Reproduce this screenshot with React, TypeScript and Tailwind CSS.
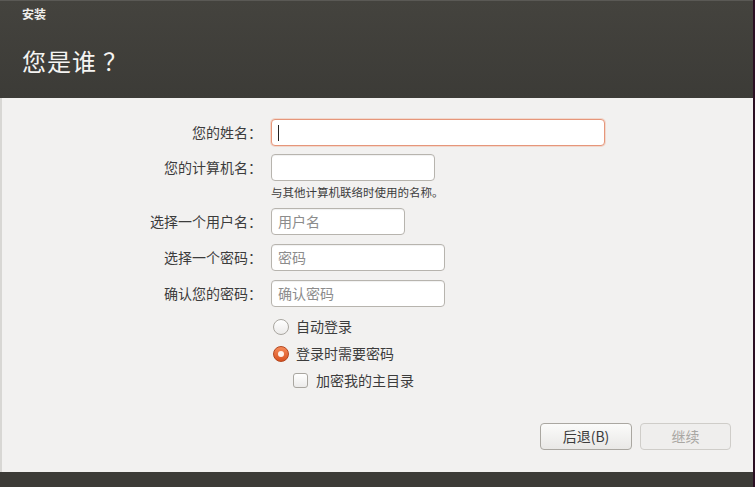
import React from 'react';

const font = { fontFamily: '"Noto Sans CJK SC", "Noto Sans", sans-serif' };

const Field = ({ label, width, placeholder, focused }: { label: string; width: string; placeholder?: string; focused?: boolean }) => (
  <div className="flex items-center h-[27px]">
    <div className="w-[260px] text-right text-[14px] text-[#3c3c3c]">{label}</div>
    <div
      className={`ml-[9px] h-[27px] rounded-[4px] border bg-white flex items-center px-[6px] text-[14px] ${width} ${
        focused ? 'border-[#e6967a] shadow-[0_0_0_1px_rgba(240,170,140,0.35)]' : 'border-[#b7b4ae] shadow-[inset_0_1px_1px_rgba(0,0,0,0.06)]'
      }`}
    >
      {focused && <span className="w-px h-[16px] bg-[#222]" />}
      {placeholder && <span className="text-[#8c8c8c]">{placeholder}</span>}
    </div>
  </div>
);

export default function App() {
  return (
    <div className="w-[755px] h-[487px] flex flex-col bg-[#f2f1f0] overflow-hidden border-r-2 border-[#2c0f24]" style={font}>
      {/* header */}
      <div className="h-[98px] bg-[#3c3b37] bg-gradient-to-b from-[#44433e] to-[#3c3b37] border-t border-[#5a5955] px-[22px] shrink-0">
        <div className="pt-[4px] text-[12px] font-bold text-[#f0efec]">安装</div>
        <div className="mt-[20px] text-[24px] text-[#f5f4f2] tracking-[1px] flex items-baseline">
          <span>您是谁</span>
          <span className="ml-[6px]">？</span>
        </div>
      </div>

      {/* form */}
      <div className="flex-1 flex flex-col border-l-2 border-[#d8d7d4]">
        <div className="mt-[21px] flex flex-col">
          <Field label="您的姓名：" width="w-[334px]" focused />
          <div className="mt-[8px]">
            <Field label="您的计算机名：" width="w-[164px]" />
          </div>
          <div className="ml-[269px] mt-[3px] text-[11.5px] leading-[16px] text-[#3c3c3c]">与其他计算机联络时使用的名称。</div>
          <div className="mt-[8px]">
            <Field label="选择一个用户名：" width="w-[134px]" placeholder="用户名" />
          </div>
          <div className="mt-[9px]">
            <Field label="选择一个密码：" width="w-[174px]" placeholder="密码" />
          </div>
          <div className="mt-[9px]">
            <Field label="确认您的密码：" width="w-[174px]" placeholder="确认密码" />
          </div>

          <div className="ml-[269px] mt-[6px] flex flex-col text-[14px] text-[#3c3c3c]">
            <div className="h-[27px] flex items-center gap-[7px]">
              <span className="ml-[2px] w-[16px] h-[16px] rounded-full border border-[#a9a6a0] bg-gradient-to-b from-white to-[#ecebea]" />
              <span>自动登录</span>
            </div>
            <div className="h-[27px] flex items-center gap-[7px]">
              <span className="ml-[2px] w-[16px] h-[16px] rounded-full border border-[#b4461e] bg-gradient-to-b from-[#f58a58] to-[#d9521f] flex items-center justify-center">
                <span className="w-[6px] h-[6px] rounded-full bg-[#fff3ec]" />
              </span>
              <span>登录时需要密码</span>
            </div>
            <div className="h-[27px] flex items-center gap-[8px] ml-[22px]">
              <span className="w-[15px] h-[15px] rounded-[3px] border border-[#a9a6a0] bg-gradient-to-b from-white to-[#ecebea]" />
              <span>加密我的主目录</span>
            </div>
          </div>
        </div>

        <div className="mt-auto mb-[22px] flex justify-end gap-[8px] pr-[22px]">
          <button className="w-[92px] h-[27px] rounded-[4px] border border-[#aaa7a1] bg-gradient-to-b from-[#fbfbfa] to-[#e9e8e6] text-[14px] text-[#3c3c3c]">
            后退(B)
          </button>
          <button className="w-[91px] h-[27px] rounded-[4px] border border-[#cfcdc9] bg-[#efeeed] text-[14px] text-[#a9a7a3]">
            继续
          </button>
        </div>
      </div>

      <div className="h-[15px] bg-[#3c3b37] shrink-0" />
    </div>
  );
}
